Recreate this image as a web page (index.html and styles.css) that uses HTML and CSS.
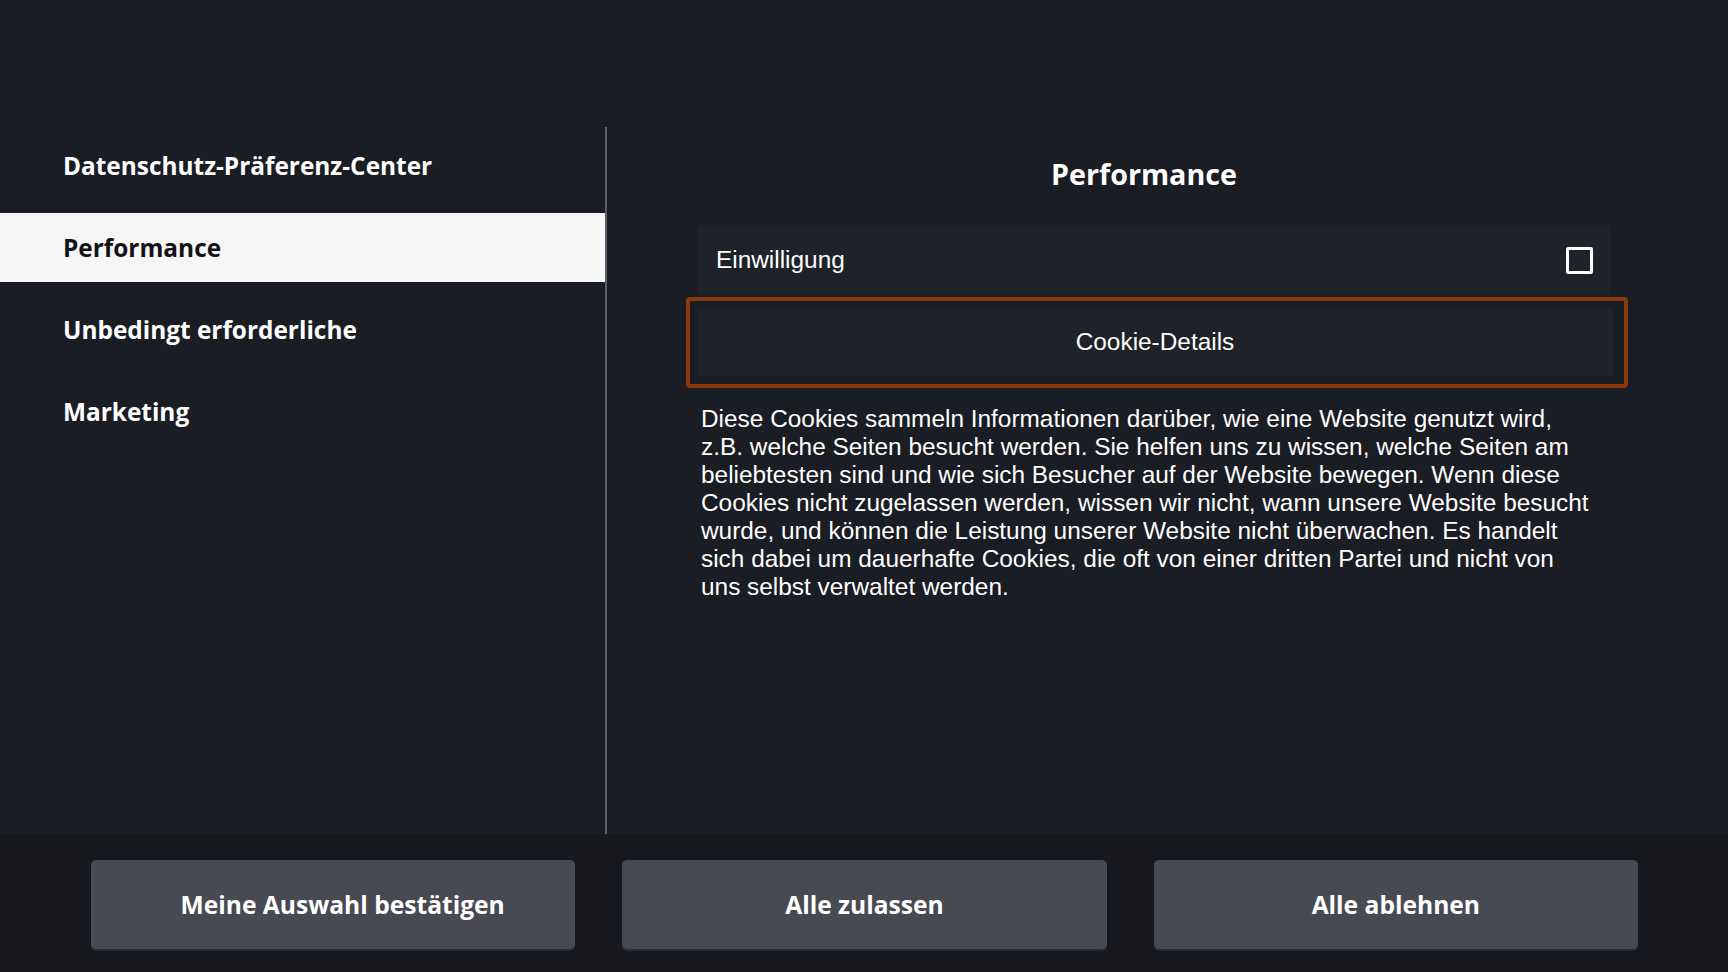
FILE: index.html
```html
<!DOCTYPE html>
<html lang="de">
<head>
<meta charset="utf-8">
<title>Datenschutz-Präferenz-Center</title>
<link rel="stylesheet" href="styles.css">
</head>
<body>
<div class="screen">
  <main class="main">
    <nav class="nav">
      <div class="nav-item nav-title">Datenschutz-Präferenz-Center</div>
      <div class="nav-item active">Performance</div>
      <div class="nav-item">Unbedingt erforderliche</div>
      <div class="nav-item">Marketing</div>
    </nav>
    <section class="panel">
      <div class="content">
        <h1 class="heading">Performance</h1>
        <div class="consent-row">
          <span class="consent-label">Einwilligung</span>
          <span class="checkbox"></span>
        </div>
        <div class="focus-ring">
          <div class="details-btn">Cookie-Details</div>
        </div>
        <p class="desc">Diese Cookies sammeln Informationen darüber, wie eine Website genutzt wird, z.B. welche Seiten besucht werden. Sie helfen uns zu wissen, welche Seiten am beliebtesten sind und wie sich Besucher auf der Website bewegen. Wenn diese Cookies nicht zugelassen werden, wissen wir nicht, wann unsere Website besucht wurde, und können die Leistung unserer Website nicht überwachen. Es handelt sich dabei um dauerhafte Cookies, die oft von einer dritten Partei und nicht von uns selbst verwaltet werden.</p>
      </div>
    </section>
  </main>
  <footer class="footer">
    <div class="btn btn-first">Meine Auswahl bestätigen</div>
    <div class="btn">Alle zulassen</div>
    <div class="btn">Alle ablehnen</div>
  </footer>
</div>
</body>
</html>
```
FILE: styles.css
```css
* { box-sizing: border-box; }
html, body { margin: 0; padding: 0; }
body {
  background: #1a1d23;
  color: #ffffff;
  font-family: "Open Sans", "Noto Sans", sans-serif;
  width: 1728px;
  height: 972px;
  overflow: hidden;
}
.screen {
  display: flex;
  flex-direction: column;
  height: 972px;
}
.main {
  display: flex;
  height: 834px;
  padding-top: 127px;
  background: #1a1d23;
}
.nav {
  width: 607px;
  flex: none;
  border-right: 2px solid #5c6068;
  display: flex;
  flex-direction: column;
  gap: 13px;
  padding-top: 4px;
  height: 707px;
}
.nav-item {
  height: 69px;
  display: flex;
  align-items: center;
  padding-left: 63px;
  font-size: 24.4px;
  font-weight: 700;
  color: #ffffff;
}
.nav-item.active {
  background: #f6f6f7;
  color: #121316;
}
.panel {
  flex: 1;
  padding: 0 100px 0 79px;
}
.content {
  display: flex;
  flex-direction: column;
}
.heading {
  margin: 29px 0 33px;
  padding-right: 26px;
  text-align: center;
  font-size: 28.7px;
  line-height: 36px;
  font-weight: 700;
}
.consent-row {
  margin: 0 17px 2px 11px;
  height: 70px;
  background: #1f2229;
  display: flex;
  align-items: center;
  justify-content: space-between;
  padding: 0 18px 0 19px;
  font-family: "Liberation Sans", Arial, sans-serif;
  font-size: 24.4px;
}
.checkbox {
  width: 27px;
  height: 27px;
  border: 3px solid #ffffff;
  border-radius: 2px;
}
.focus-ring {
  height: 91px;
  border: 4px solid #8a3a0d;
  border-radius: 4px;
  padding: 6px 11px 8px 7px;
}
.details-btn {
  height: 69px;
  background: #1f2229;
  display: flex;
  align-items: center;
  justify-content: center;
  font-family: "Liberation Sans", Arial, sans-serif;
  font-size: 24.4px;
}
.desc {
  margin: 17px 0 0 15px;
  width: 890px;
  font-family: "Liberation Sans", Arial, sans-serif;
  font-size: 24.4px;
  line-height: 28px;
}
.footer {
  flex: 1;
  background: #16181d;
  display: grid;
  grid-template-columns: repeat(3, 1fr);
  align-items: start;
  gap: 47px;
  padding: 26px 90px 0 91px;
}
.btn {
  height: 89px;
  background: #474a52;
  border-radius: 5px;
  display: flex;
  align-items: center;
  justify-content: center;
  font-size: 24.6px;
  font-weight: 700;
  box-shadow: 0 2px 0 #2a2c32;
}
.btn-first {
  padding-left: 19px;
}
```
